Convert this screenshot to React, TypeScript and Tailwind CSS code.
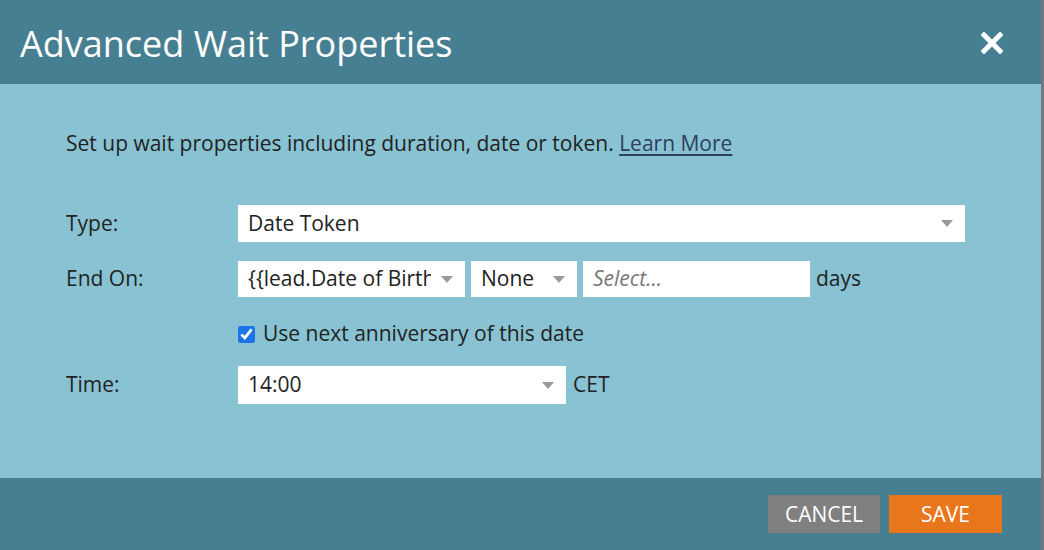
import React, { useState } from "react";

const font = { fontFamily: '"Open Sans", "Noto Sans", Arial, sans-serif' };

function Caret() {
  return (
    <svg width="12" height="7" viewBox="0 0 12 7" className="shrink-0">
      <path d="M0 0 H12 L6 7 Z" fill="#9a9a9a" />
    </svg>
  );
}

function SelectBox({ value, className }: { value: string; className: string }) {
  return (
    <div className={`flex items-center bg-white pl-[10px] pr-[12px] ${className}`}>
      <span className="mr-[10px] flex-1 overflow-hidden whitespace-nowrap text-[21px] text-[#222]">{value}</span>
      <Caret />
    </div>
  );
}

export default function App() {
  const [useAnniversary, setUseAnniversary] = useState(true);

  return (
    <div className="flex h-[550px] w-[1044px] bg-[#70797d]" style={font}>
      <div className="flex w-[1041px] flex-col">
        {/* Header */}
        <div className="flex h-[84px] items-center justify-between bg-[#477f92] pl-[20px] pr-[38px]">
          <h1 className="pt-[3px] text-[36px] leading-none text-white">Advanced Wait Properties</h1>
          <svg width="22" height="22" viewBox="0 0 22 22" className="mt-[2px]">
            <path d="M3 3 L19 19 M19 3 L3 19" stroke="white" strokeWidth="5" strokeLinecap="square" />
          </svg>
        </div>

        {/* Body */}
        <div className="flex-1 bg-[#89c3d3] pl-[66px] pt-[45px] text-[#222]">
          <p className="text-[21px] leading-[28px]">
            Set up wait properties including duration, date or token.{" "}
            <a className="text-[#2d3f62] underline underline-offset-[3px]">Learn More</a>
          </p>

          <div className="mt-[48px] grid grid-cols-[172px_1fr] items-center gap-y-[19px]">
            <span className="text-[21px]">Type:</span>
            <SelectBox value="Date Token" className="h-[37px] w-[727px]" />

            <span className="text-[21px]">End On:</span>
            <div className="flex items-center gap-[6px]">
              <SelectBox value="{{lead.Date of Birth}}" className="h-[36px] w-[227px]" />
              <SelectBox value="None" className="h-[36px] w-[106px]" />
              <div className="flex h-[36px] w-[227px] items-center bg-white pl-[10px]">
                <span className="text-[21px] italic text-[#777]">Select...</span>
              </div>
              <span className="text-[21px]">days</span>
            </div>

            <span />
            <label className="mb-[3px] mt-[8px] flex h-[20px] items-center gap-[8px] text-[21px]">
              <input
                type="checkbox"
                checked={useAnniversary}
                onChange={(e) => setUseAnniversary(e.target.checked)}
                className="h-[17px] w-[17px] accent-[#1a73e8]"
              />
              Use next anniversary of this date
            </label>

            <span className="text-[21px]">Time:</span>
            <div className="flex items-center gap-[7px]">
              <SelectBox value="14:00" className="h-[38px] w-[328px]" />
              <span className="text-[21px]">CET</span>
            </div>
          </div>
        </div>

        {/* Footer */}
        <div className="flex h-[72px] items-center justify-end gap-[9px] bg-[#477f92] pr-[39px]">
          <button className="h-[38px] w-[112px] bg-[#808080] pt-[2px] text-[21px] text-white">CANCEL</button>
          <button className="h-[38px] w-[113px] bg-[#e8761c] pt-[2px] text-[21px] text-white">SAVE</button>
        </div>
      </div>
    </div>
  );
}
